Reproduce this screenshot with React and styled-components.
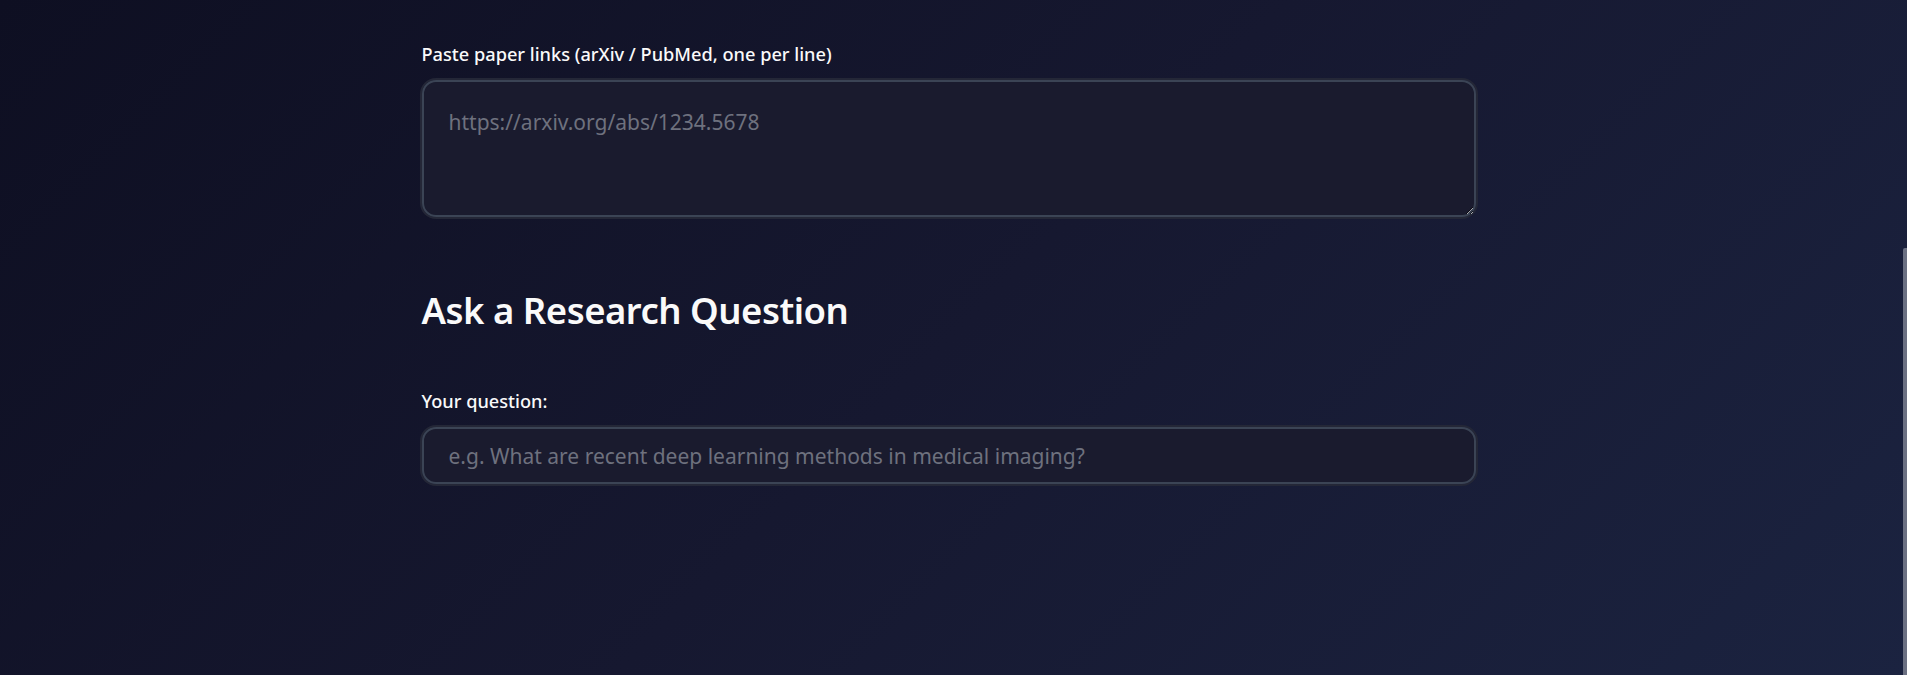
import React from "react";
import styled, { createGlobalStyle } from "styled-components";

const GlobalStyle = createGlobalStyle`
  html, body {
    margin: 0;
    padding: 0;
    height: 100%;
    overflow: hidden;
  }
  body {
    font-family: "Noto Sans", "Open Sans", sans-serif;
    background: linear-gradient(135deg, #0e0f22 0%, #161830 50%, #1b2340 100%);
    color: #fafafa;
  }
`;

const Page = styled.div`
  position: relative;
  min-height: 100vh;
`;

const Main = styled.main`
  width: 1054px;
  margin-left: calc(50% - 532px);
  padding-top: 41px;
  display: flex;
  flex-direction: column;
`;

const Field = styled.div`
  display: flex;
  flex-direction: column;
  gap: 13px;
`;

const Label = styled.label`
  font-size: 18.2px;
  line-height: 26px;
  font-weight: 500;
  color: #fafafa;
`;

const Box = styled.div`
  border-radius: 14px;
  box-shadow: 0 0 0 2px #242737;
`;

const TextArea = styled.textarea`
  display: block;
  box-sizing: border-box;
  width: 100%;
  height: 137px;
  padding: 26px 25px;
  border: 2px solid #3b4455;
  border-radius: 14px;
  background: #1a1b2e;
  color: #fafafa;
  font-family: inherit;
  font-size: 21px;
  line-height: 28px;
  outline: none;
  &::placeholder {
    color: #6e717e;
  }
`;

const Input = styled.input`
  display: block;
  box-sizing: border-box;
  width: 100%;
  height: 57px;
  padding: 0 25px;
  border: 2px solid #3b4455;
  border-radius: 14px;
  background: #1a1b2e;
  color: #fafafa;
  font-family: inherit;
  font-size: 21px;
  outline: none;
  &::placeholder {
    color: #6e717e;
  }
`;

const Heading = styled.h2`
  margin: 69px 0 54px;
  font-size: 36.5px;
  line-height: 48px;
  font-weight: 650;
  color: #fafafa;
  letter-spacing: -0.5px;
`;

const ScrollThumb = styled.div`
  position: absolute;
  right: 0;
  top: 248px;
  bottom: 0;
  width: 4px;
  border-radius: 2px 0 0 0;
  background: #6b7082;
`;

export default function App() {
  return (
    <Page>
      <GlobalStyle />
      <Main>
        <Field>
          <Label>Paste paper links (arXiv / PubMed, one per line)</Label>
          <Box>
            <TextArea placeholder="https://arxiv.org/abs/1234.5678" />
          </Box>
        </Field>
        <Heading>Ask a Research Question</Heading>
        <Field>
          <Label>Your question:</Label>
          <Box>
            <Input placeholder="e.g. What are recent deep learning methods in medical imaging?" />
          </Box>
        </Field>
      </Main>
      <ScrollThumb />
    </Page>
  );
}
